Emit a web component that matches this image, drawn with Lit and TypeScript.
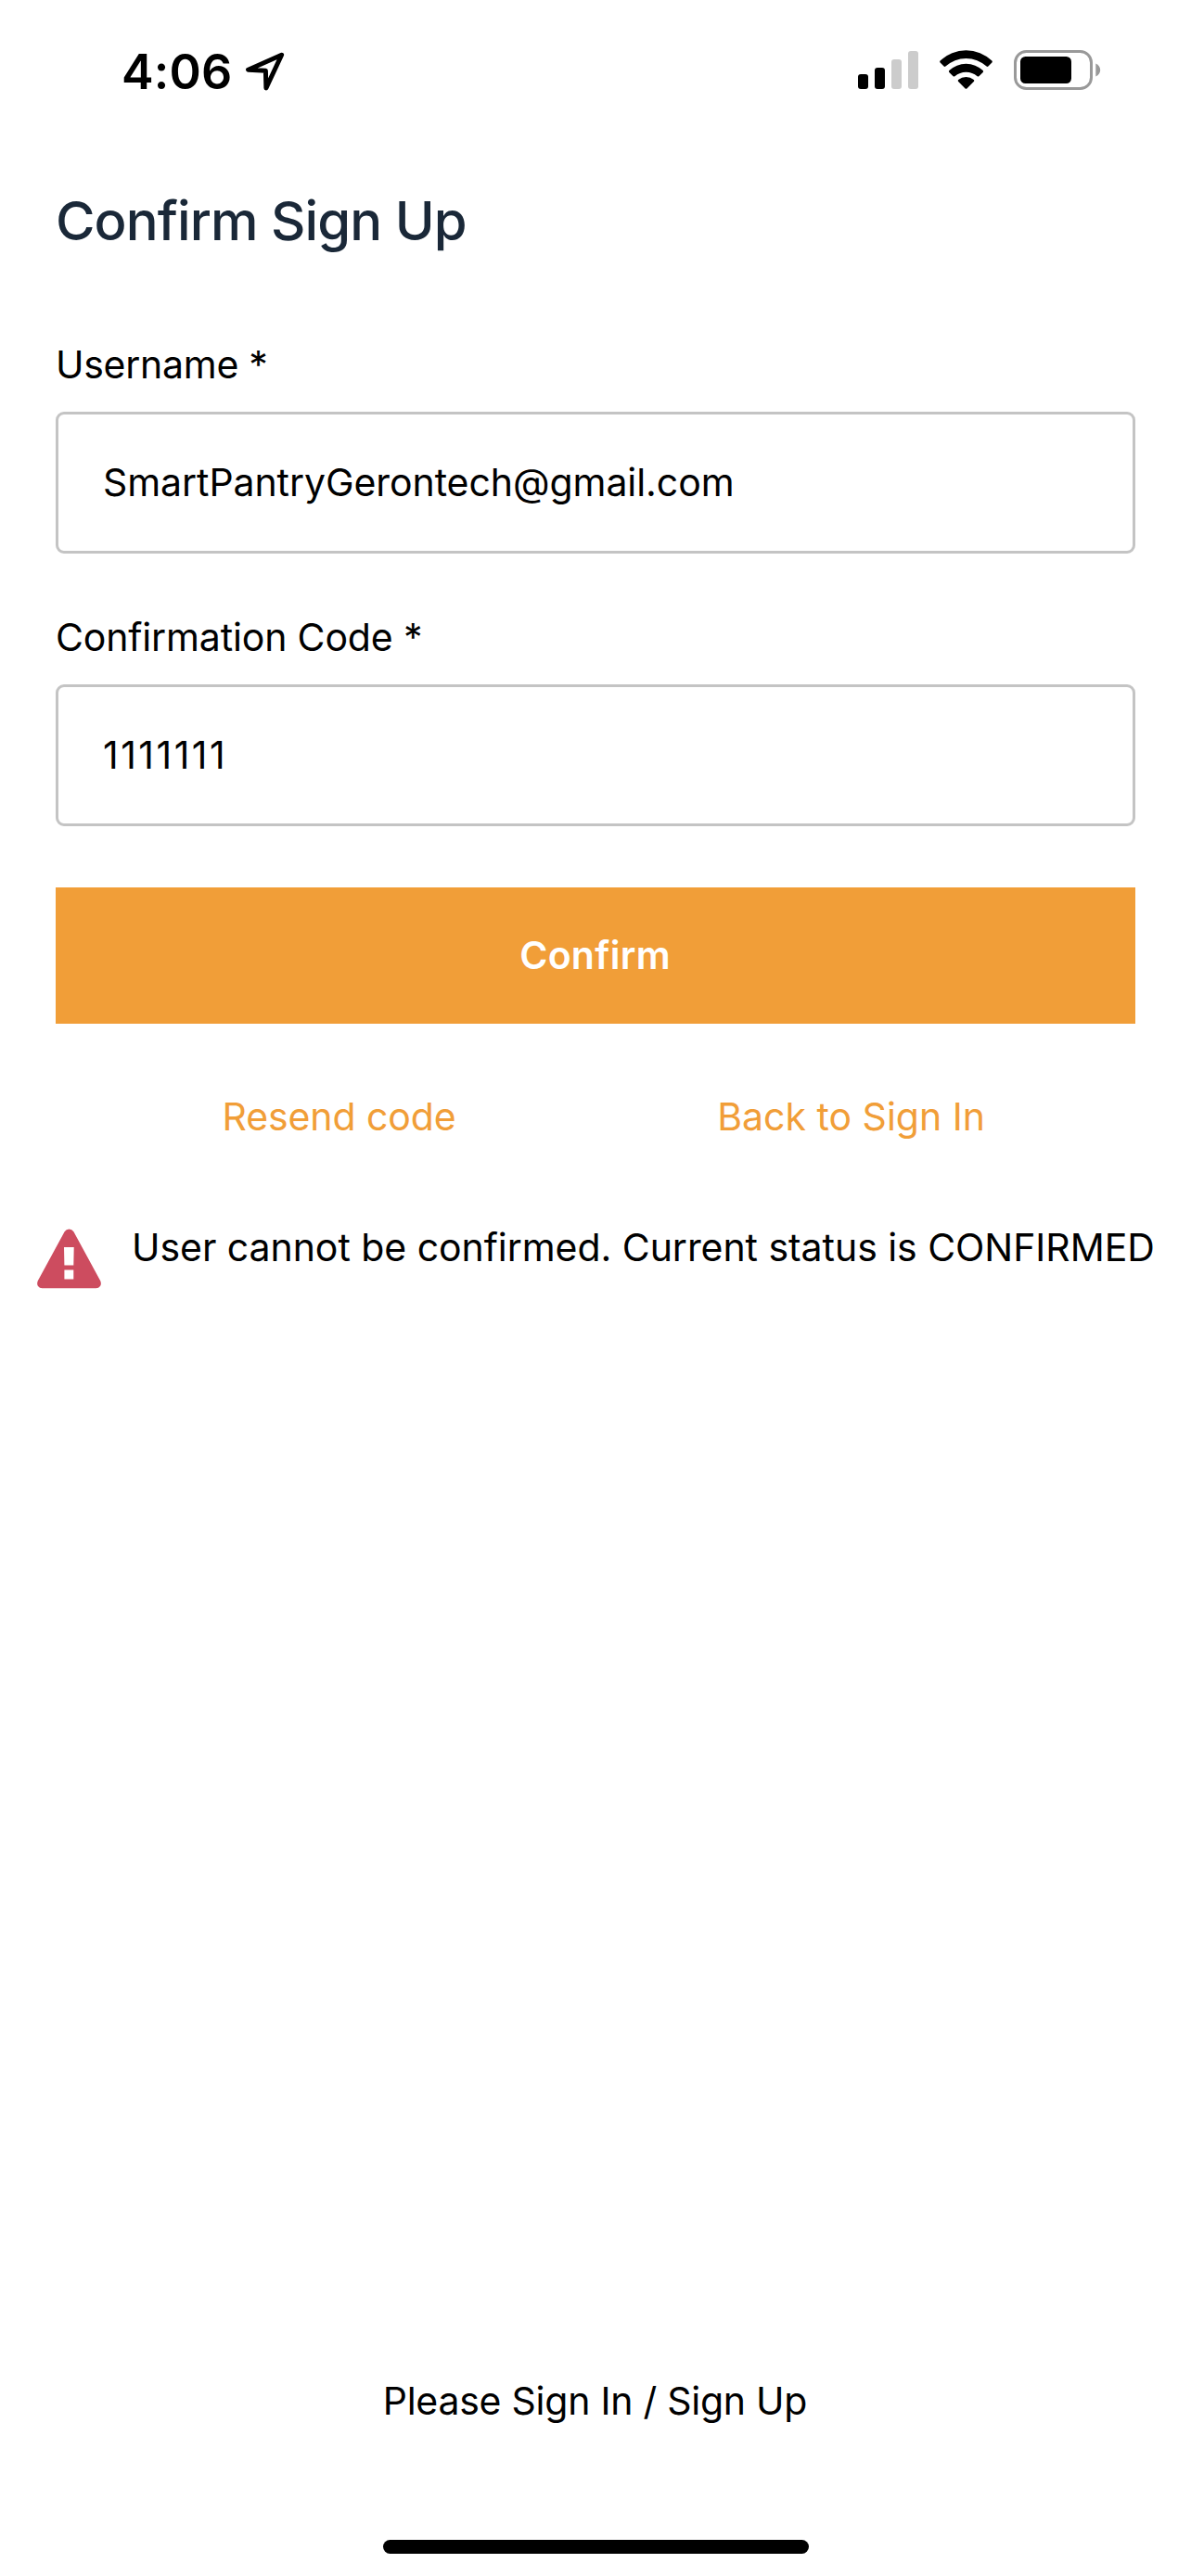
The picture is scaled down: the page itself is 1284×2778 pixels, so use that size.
import { LitElement, html, css } from "lit";
import { customElement, property } from "lit/decorators.js";

@customElement("status-bar")
export class StatusBar extends LitElement {
  static styles = css`
    :host {
      display: flex;
      justify-content: space-between;
      box-sizing: border-box;
      height: 201px;
      padding: 45px 97px 0 131px;
      color: #000;
    }
    .left,
    .right {
      display: flex;
      align-items: flex-start;
    }
    .time {
      font-size: 52px;
      font-weight: 600;
      line-height: 66px;
      letter-spacing: 0.2px;
      width: 132.5px;
    }
    svg {
      display: block;
      flex: none;
    }
    .arrow {
      margin-top: 10px;
    }
    .signal {
      margin: 10px 23px 0 0;
    }
    .wifi {
      margin: 9px 23px 0 0;
    }
    .battery {
      margin-top: 9px;
    }
  `;

  render() {
    return html`
      <div class="left">
        <span class="time">4:06</span>
        <svg class="arrow" width="44" height="46" viewBox="0 0 44 46">
          <path
            d="M39.6 4.2 L3.6 20.3 L22.4 21.2 L22.9 40 Z"
            fill="none"
            stroke="#000"
            stroke-width="5"
            stroke-linejoin="round"
          />
        </svg>
      </div>
      <div class="right">
        <svg class="signal" width="65" height="41" viewBox="0 0 65 41">
          <rect x="0" y="25" width="11" height="16" rx="3" />
          <rect x="18" y="18" width="11" height="23" rx="3" />
          <rect x="36" y="9" width="11" height="32" rx="3" fill="#ccc" />
          <rect x="54" y="0" width="11" height="41" rx="3" fill="#ccc" />
        </svg>
        <svg class="wifi" width="57" height="42" viewBox="0 0 57 42">
          <path
            d="M.6 11.6 A40 40 0 0 1 56.4 11.6 Q57.2 12.5 56.4 13.4 L52.4 17.6 Q51.5 18.4 50.6 17.6 A32.5 32.5 0 0 0 6.4 17.6 Q5.5 18.4 4.6 17.6 L.6 13.4 Q-.2 12.5 .6 11.6Z"
          />
          <path
            d="M10.3 22.1 A26.5 26.5 0 0 1 46.7 22.1 Q47.6 23 46.7 23.9 L42.4 28.2 Q41.5 29 40.6 28.2 A18.5 18.5 0 0 0 16.4 28.2 Q15.5 29 14.6 28.2 L10.3 23.9 Q9.4 23 10.3 22.1Z"
          />
          <path
            d="M20.2 32 A13 13 0 0 1 36.8 32 Q37.7 33 36.8 33.9 L29.4 41.4 Q28.5 42.2 27.6 41.4 L20.2 33.9 Q19.3 33 20.2 32Z"
          />
        </svg>
        <svg class="battery" width="94" height="43" viewBox="0 0 94 43">
          <rect x="1.5" y="1.5" width="82" height="40" rx="12" fill="none" stroke="#999" stroke-width="3" />
          <rect x="7" y="7" width="55" height="29" rx="5.5" />
          <path d="M88.3 14.5 C94.8 17.2 94.8 25.8 88.3 28.5Z" fill="#999" />
        </svg>
      </div>
    `;
  }
}

@customElement("form-field")
export class FormField extends LitElement {
  @property() label = "";
  @property() value = "";

  static styles = css`
    :host {
      display: flex;
      flex-direction: column;
      gap: 24px;
    }
    .label {
      line-height: 53px;
      letter-spacing: var(--label-spacing, -0.27px);
      white-space: nowrap;
    }
    .box {
      box-sizing: border-box;
      height: 153px;
      border: 3px solid #c4c4c4;
      border-radius: 9px;
      padding: 0 48px;
      line-height: 146px;
      letter-spacing: var(--value-spacing, -0.07px);
      white-space: nowrap;
    }
  `;

  render() {
    return html`
      <div class="label">${this.label}</div>
      <div class="box">${this.value}</div>
    `;
  }
}

@customElement("app-root")
export class AppRoot extends LitElement {
  static styles = css`
    :host {
      display: flex;
      flex-direction: column;
      width: 1284px;
      height: 2778px;
      overflow: hidden;
      background: #fff;
      color: #000;
      font-family: Inter, "Liberation Sans", sans-serif;
      font-size: 41px;
      line-height: 53px;
    }
    .form {
      display: flex;
      flex-direction: column;
      padding: 0 60px;
    }
    .title {
      margin: 0 0 92px;
      font-size: 58px;
      font-weight: 500;
      line-height: 74px;
      letter-spacing: -0.92px;
      color: #1a2838;
    }
    form-field {
      margin-bottom: 64px;
    }
    .code {
      --label-spacing: -0.15px;
      --value-spacing: 2.48px;
      margin-bottom: 66px;
    }
    .confirm {
      height: 147px;
      border: 0;
      padding: 0 1px 0 0;
      background: #f19e38;
      color: #fff;
      font: 600 41px/144px Inter, "Liberation Sans", sans-serif;
      letter-spacing: 0.28px;
      text-align: center;
    }
    .confirm span {
      display: block;
      padding-bottom: 2px;
    }
    .links {
      display: flex;
      justify-content: space-between;
      padding: 0 162px 0 179.5px;
      margin-top: 74px;
      color: #f19e38;
      white-space: nowrap;
    }
    .resend {
      letter-spacing: -0.1px;
    }
    .error {
      display: flex;
      gap: 33px;
      padding-left: 40px;
      margin-top: 88px;
      letter-spacing: -0.05px;
      white-space: nowrap;
    }
    .error svg {
      flex: none;
      margin-top: 6px;
    }
    .footer {
      margin-top: auto;
      padding-right: 1px;
      text-align: center;
      letter-spacing: -0.25px;
    }
    .home {
      align-self: center;
      width: 459px;
      height: 15px;
      margin: 123px 0 24px;
      border-radius: 8px;
      background: #000;
    }
  `;

  render() {
    return html`
      <status-bar></status-bar>
      <div class="form">
        <h1 class="title">Confirm Sign Up</h1>
        <form-field label="Username *" value="SmartPantryGerontech@gmail.com"></form-field>
        <form-field class="code" label="Confirmation Code *" value="1111111"></form-field>
        <button class="confirm"><span>Confirm</span></button>
        <div class="links">
          <span class="resend">Resend code</span>
          <span class="back">Back to Sign In</span>
        </div>
      </div>
      <div class="error">
        <svg width="69" height="65" viewBox="0 0 69 65">
          <path
            fill="#cd4c5f"
            fill-rule="evenodd"
            d="M29.6 3.2 Q31.4 .5 34.5 .5 Q37.6 .5 39.4 3.2 L68.2 56.3 Q69.6 59.6 68 62 Q66.4 64.3 63.5 64.3 L5.5 64.3 Q2.6 64.3 1 62 Q-.6 59.6 .8 56.3 Z M29 20 L29.4 39.5 L39.3 39.5 L39.7 20 Z M29.4 44.5 L29.4 54.5 L39.3 54.5 L39.3 44.5 Z"
          />
        </svg>
        <span>User cannot be confirmed. Current status is CONFIRMED</span>
      </div>
      <div class="footer">Please Sign In / Sign Up</div>
      <div class="home"></div>
    `;
  }
}
